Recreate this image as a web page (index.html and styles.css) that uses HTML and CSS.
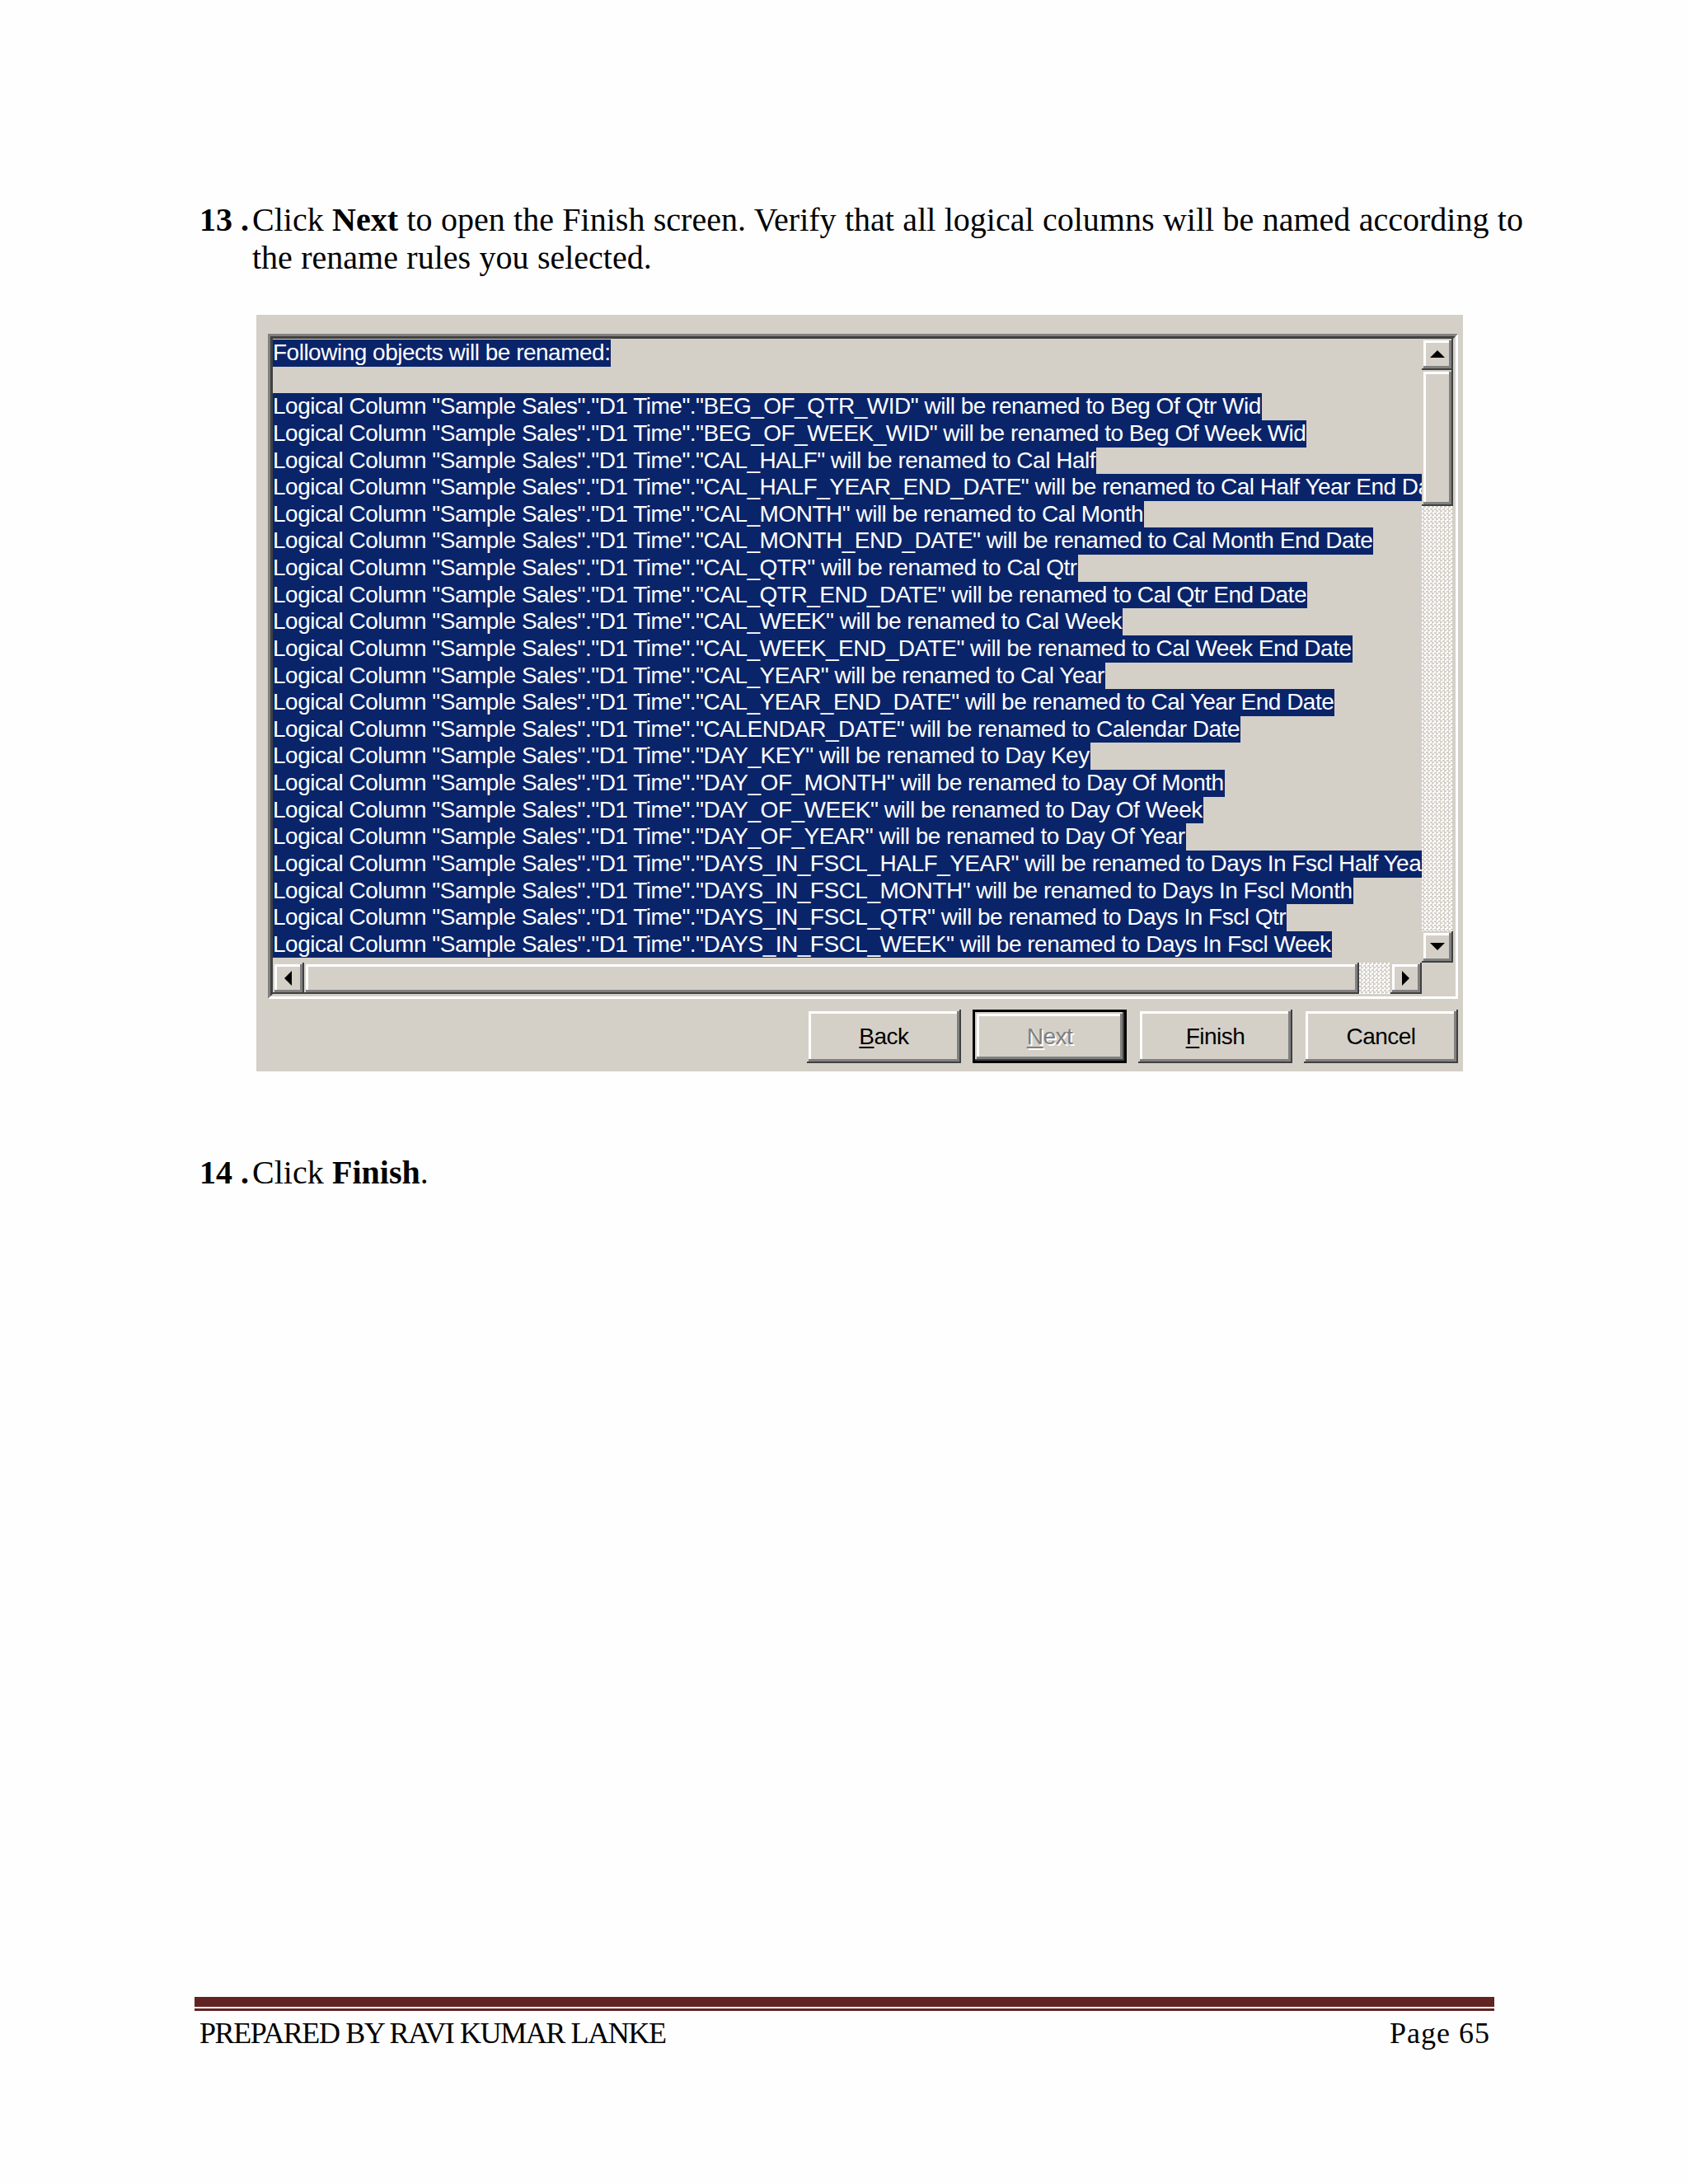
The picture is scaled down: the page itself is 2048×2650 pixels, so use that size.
FILE: index.html
```html
<!DOCTYPE html>
<html lang="en">
<head>
<meta charset="utf-8">
<title>Page 65</title>
<link rel="stylesheet" href="styles.css">
</head>
<body>
<div class="page">
  <div class="step step13">
    <span class="num">13 .</span>
    <p class="txt">Click <b>Next</b> to open the Finish screen. Verify that all logical columns will be named according to the rename rules you selected.</p>
  </div>

  <div class="dialog">
    <div class="listbox">
      <div class="client">
        <div class="viewport">
          <div class="row"><span>Following objects will be renamed:</span></div>
          <div class="row blank"></div>
          <div class="row"><span>Logical Column &quot;Sample Sales&quot;.&quot;D1 Time&quot;.&quot;BEG_OF_QTR_WID&quot; will be renamed to Beg Of Qtr Wid</span></div>
          <div class="row"><span>Logical Column &quot;Sample Sales&quot;.&quot;D1 Time&quot;.&quot;BEG_OF_WEEK_WID&quot; will be renamed to Beg Of Week Wid</span></div>
          <div class="row"><span>Logical Column &quot;Sample Sales&quot;.&quot;D1 Time&quot;.&quot;CAL_HALF&quot; will be renamed to Cal Half</span></div>
          <div class="row"><span>Logical Column &quot;Sample Sales&quot;.&quot;D1 Time&quot;.&quot;CAL_HALF_YEAR_END_DATE&quot; will be renamed to Cal Half Year End Date</span></div>
          <div class="row"><span>Logical Column &quot;Sample Sales&quot;.&quot;D1 Time&quot;.&quot;CAL_MONTH&quot; will be renamed to Cal Month</span></div>
          <div class="row"><span>Logical Column &quot;Sample Sales&quot;.&quot;D1 Time&quot;.&quot;CAL_MONTH_END_DATE&quot; will be renamed to Cal Month End Date</span></div>
          <div class="row"><span>Logical Column &quot;Sample Sales&quot;.&quot;D1 Time&quot;.&quot;CAL_QTR&quot; will be renamed to Cal Qtr</span></div>
          <div class="row"><span>Logical Column &quot;Sample Sales&quot;.&quot;D1 Time&quot;.&quot;CAL_QTR_END_DATE&quot; will be renamed to Cal Qtr End Date</span></div>
          <div class="row"><span>Logical Column &quot;Sample Sales&quot;.&quot;D1 Time&quot;.&quot;CAL_WEEK&quot; will be renamed to Cal Week</span></div>
          <div class="row"><span>Logical Column &quot;Sample Sales&quot;.&quot;D1 Time&quot;.&quot;CAL_WEEK_END_DATE&quot; will be renamed to Cal Week End Date</span></div>
          <div class="row"><span>Logical Column &quot;Sample Sales&quot;.&quot;D1 Time&quot;.&quot;CAL_YEAR&quot; will be renamed to Cal Year</span></div>
          <div class="row"><span>Logical Column &quot;Sample Sales&quot;.&quot;D1 Time&quot;.&quot;CAL_YEAR_END_DATE&quot; will be renamed to Cal Year End Date</span></div>
          <div class="row"><span>Logical Column &quot;Sample Sales&quot;.&quot;D1 Time&quot;.&quot;CALENDAR_DATE&quot; will be renamed to Calendar Date</span></div>
          <div class="row"><span>Logical Column &quot;Sample Sales&quot;.&quot;D1 Time&quot;.&quot;DAY_KEY&quot; will be renamed to Day Key</span></div>
          <div class="row"><span>Logical Column &quot;Sample Sales&quot;.&quot;D1 Time&quot;.&quot;DAY_OF_MONTH&quot; will be renamed to Day Of Month</span></div>
          <div class="row"><span>Logical Column &quot;Sample Sales&quot;.&quot;D1 Time&quot;.&quot;DAY_OF_WEEK&quot; will be renamed to Day Of Week</span></div>
          <div class="row"><span>Logical Column &quot;Sample Sales&quot;.&quot;D1 Time&quot;.&quot;DAY_OF_YEAR&quot; will be renamed to Day Of Year</span></div>
          <div class="row"><span>Logical Column &quot;Sample Sales&quot;.&quot;D1 Time&quot;.&quot;DAYS_IN_FSCL_HALF_YEAR&quot; will be renamed to Days In Fscl Half Year</span></div>
          <div class="row"><span>Logical Column &quot;Sample Sales&quot;.&quot;D1 Time&quot;.&quot;DAYS_IN_FSCL_MONTH&quot; will be renamed to Days In Fscl Month</span></div>
          <div class="row"><span>Logical Column &quot;Sample Sales&quot;.&quot;D1 Time&quot;.&quot;DAYS_IN_FSCL_QTR&quot; will be renamed to Days In Fscl Qtr</span></div>
          <div class="row"><span>Logical Column &quot;Sample Sales&quot;.&quot;D1 Time&quot;.&quot;DAYS_IN_FSCL_WEEK&quot; will be renamed to Days In Fscl Week</span></div>
        </div>
        <div class="vscroll">
          <div class="sbtn raised"><svg class="arr" width="18" height="10" viewBox="0 0 18 10"><polygon points="9,0 18,9 0,9" fill="#000"/></svg></div>
          <div class="vthumb raised"></div>
          <div class="track"></div>
          <div class="sbtn raised"><svg class="arr" width="18" height="10" viewBox="0 0 18 10"><polygon points="0,0 18,0 9,9" fill="#000"/></svg></div>
        </div>
        <div class="hscroll">
          <div class="sbtn raised"><svg class="arr" width="10" height="18" viewBox="0 0 10 18"><polygon points="0,9 9,0 9,18" fill="#000"/></svg></div>
          <div class="hthumb raised"></div>
          <div class="htrack track"></div>
          <div class="sbtn raised"><svg class="arr" width="10" height="18" viewBox="0 0 10 18"><polygon points="0,0 9,9 0,18" fill="#000"/></svg></div>
        </div>
        <div class="corner"></div>
      </div>
    </div>
    <div class="buttons">
      <div class="btn raised"><span><u>B</u>ack</span></div>
      <div class="btn default disabled"><div class="inner raised"><span><u>N</u>ext</span></div></div>
      <div class="btn raised"><span><u>F</u>inish</span></div>
      <div class="btn raised"><span>Cancel</span></div>
    </div>
  </div>

  <div class="step step14">
    <span class="num">14 .</span>
    <p class="txt">Click <b>Finish</b>.</p>
  </div>

  <footer class="footer">
    <div class="rule"></div>
    <div class="foot-text">
      <span class="author">PREPARED BY RAVI KUMAR LANKE</span>
      <span class="pageno">Page 65</span>
    </div>
  </footer>
</div>
</body>
</html>
```
FILE: styles.css
```css
html, body {
  margin: 0;
  padding: 0;
  background: #ffffff;
}

.page {
  width: 2048px;
  height: 2650px;
  box-sizing: border-box;
  padding-top: 244px;
  font-family: "Liberation Serif", "Times New Roman", serif;
  color: #000;
  background: #fefefe;
  overflow: hidden;
}

/* numbered steps */
.step {
  display: flex;
  margin-left: 242px;
  font-size: 40px;
  line-height: 46px;
}
.step .num {
  flex: none;
  width: 64px;
  font-weight: bold;
  white-space: pre;
}
.step .txt {
  margin: 0;
  width: 1590px;
  word-spacing: 0.4px;
}
.step14 {
  margin-top: 100px;
}

/* dialog screenshot */
.dialog {
  margin: 46px 0 0 311px;
  width: 1464px;
  height: 918px;
  box-sizing: border-box;
  padding: 23px 6px 10px 14px;
  background: #d4d0c8;
  display: flex;
  flex-direction: column;
  font-family: "Liberation Sans", Arial, sans-serif;
  font-size: 28px;
  letter-spacing: -0.5px;
}

.listbox {
  width: 1444px;
  height: 807px;
  box-sizing: border-box;
  border: 3px solid;
  border-color: #808080 #ffffff #ffffff #808080;
}
.client {
  width: 100%;
  height: 100%;
  box-sizing: border-box;
  border: 3px solid;
  border-color: #404040 #d4d0c8 #d4d0c8 #404040;
  display: grid;
  grid-template-columns: 1394px 38px;
  grid-template-rows: 757px 38px;
  background: #d4d0c8;
}

.viewport {
  overflow: hidden;
  padding-top: 1px;
  color: #fff;
}
.row {
  height: 32.64px;
  white-space: nowrap;
}
.row span {
  display: inline-block;
  height: 32.64px;
  line-height: 32.64px;
  background: #0a246a;
  padding-right: 1px;
  vertical-align: top;
}

.raised {
  background: #d4d0c8;
  box-shadow:
    inset -2px -2px 0 #404040,
    inset 2px 2px 0 #d4d0c8,
    inset -5px -5px 0 #808080,
    inset 5px 5px 0 #ffffff;
}

.vscroll {
  display: flex;
  flex-direction: column;
}
.sbtn {
  flex: none;
  width: 38px;
  height: 38px;
  display: flex;
  align-items: center;
  justify-content: center;
}
.arr {
  display: block;
}
.vthumb {
  flex: none;
  height: 165px;
}
.track {
  flex: 1;
  background: repeating-conic-gradient(#d4d0c8 0 25%, #ffffff 0 50%) 0 0 / 5px 5px;
}
.hscroll {
  display: flex;
}
.hthumb {
  flex: 1;
}
.htrack {
  flex: none;
  width: 38px;
}
.corner {
  background: #d4d0c8;
}

/* push buttons */
.buttons {
  display: flex;
  justify-content: flex-end;
  gap: 14px;
  margin-top: 13px;
}
.btn {
  width: 187px;
  height: 65px;
  box-sizing: border-box;
  display: flex;
  align-items: center;
  justify-content: center;
  color: #000;
}
.btn u {
  text-decoration-thickness: 2px;
  text-underline-offset: 3px;
}
.btn.default {
  border: 3px solid #000;
  background: #d4d0c8;
}
.btn.default .inner {
  width: 100%;
  height: 100%;
  display: flex;
  align-items: center;
  justify-content: center;
}
.btn.disabled span {
  color: #808080;
  text-shadow: 2px 2px 0 #ffffff;
}

/* footer */
.footer {
  margin: 977px 0 0 236px;
  width: 1577px;
}
.rule {
  height: 2px;
  border-top: 12px solid #622423;
  border-bottom: 3px solid #622423;
}
.foot-text {
  display: flex;
  justify-content: space-between;
  margin-top: 5px;
  padding: 0 5px 0 6px;
  font-size: 36px;
  line-height: 44px;
}
.author {
  letter-spacing: -1.4px;
}
.pageno {
  letter-spacing: 1px;
}
```
